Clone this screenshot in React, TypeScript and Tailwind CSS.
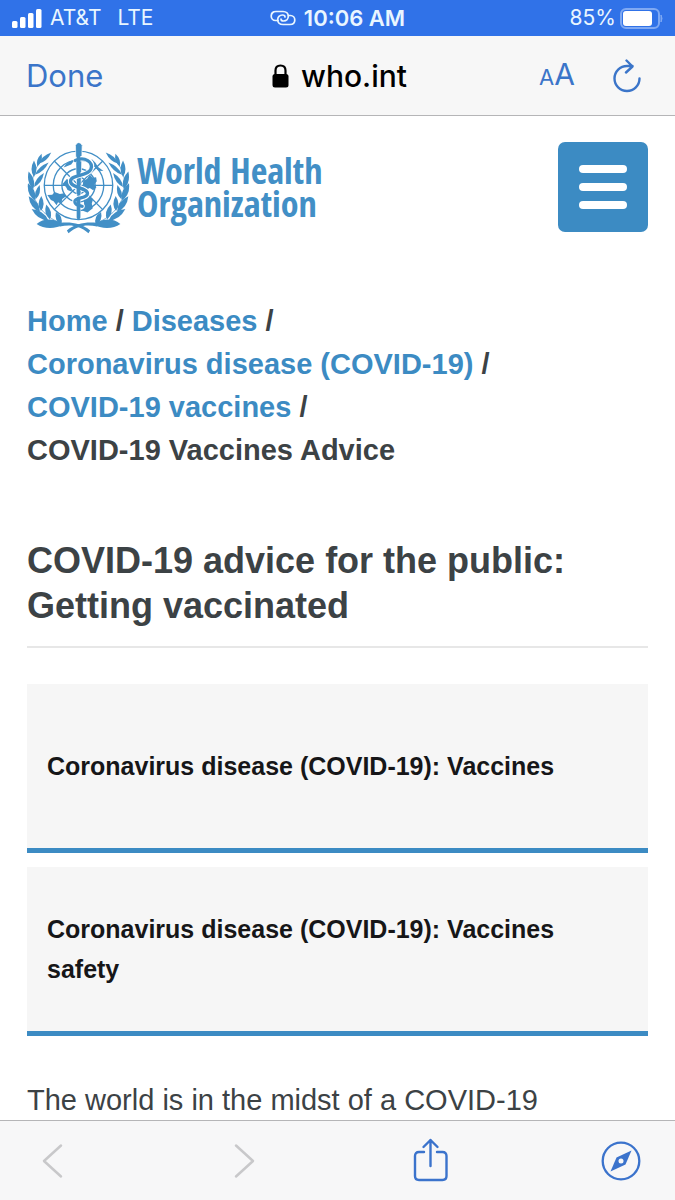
import React from "react";

const leaves: { base: [number, number]; tip: [number, number]; width: number }[] = [
  { base: [68, 98], tip: [106, 64], width: 12 },
  { base: [64, 106], tip: [77, 68], width: 12 },
  { base: [57, 131], tip: [98, 94], width: 12 },
  { base: [54, 138], tip: [54, 88], width: 15 },
  { base: [54, 168], tip: [84, 126], width: 13 },
  { base: [52, 174], tip: [38, 121], width: 16 },
  { base: [59, 205], tip: [71, 162], width: 13 },
  { base: [57, 208], tip: [36, 157], width: 17 },
  { base: [75, 240], tip: [76, 195], width: 15 },
  { base: [72, 243], tip: [38, 196], width: 18 },
  { base: [102, 266], tip: [91, 221], width: 16 },
  { base: [97, 268], tip: [47, 234], width: 18 },
  { base: [136, 280], tip: [120, 243], width: 16 },
];

function leafPath(base: [number, number], tip: [number, number], width: number) {
  const dx = tip[0] - base[0];
  const dy = tip[1] - base[1];
  const length = Math.hypot(dx, dy);
  const nx = (-dy / length) * width;
  const ny = (dx / length) * width;
  const mx = base[0] + dx * 0.45;
  const my = base[1] + dy * 0.45;
  return `M${base[0]} ${base[1]}Q${mx + nx} ${my + ny} ${tip[0]} ${tip[1]}Q${mx - nx} ${my - ny} ${base[0]} ${base[1]}Z`;
}

function Branch() {
  return (
    <g>
      {leaves.map((l) => (
        <path key={`${l.tip[0]}-${l.tip[1]}`} d={leafPath(l.base, l.tip, l.width)} />
      ))}
      <path d="M62 279C84 261 114 262 146 280C115 296 83 294 62 279Z" />
      <path d="M132 276C164 273 196 276 223 299L218 307C188 281 160 281 132 287Z" />
      <path d="M68 98Q36 142 57 205Q72 247 136 280" fill="none" stroke="#428fc6" strokeWidth="2" />
    </g>
  );
}

function Emblem() {
  return (
    <svg viewBox="33 33 310 276" className="h-[92px] w-[103px] shrink-0" fill="#428fc6" aria-hidden="true">
      <g fill="none" stroke="#428fc6" strokeWidth="4">
        <circle cx="188" cy="163" r="103" />
        <circle cx="188" cy="163" r="76" />
        <circle cx="188" cy="163" r="50" />
        <circle cx="188" cy="163" r="25" />
        <path d="M85 163H291M115 90L261 236M261 90L115 236" />
      </g>
      <path d="M94 192L109 191L116 183L132 189L145 187L151 196L139 204L137 215L126 215L122 223L113 211L105 207L99 199Z" />
      <path d="M139 160L153 144L164 151L172 163L164 171L168 182L155 177L150 167Z" />
      <path d="M202 151L214 143L222 130L230 140L241 139L243 151L236 160L242 169L232 178L222 171L209 177L201 167Z" />
      <path d="M203 197L215 190L224 199L232 205L228 218L231 232L215 245L199 239L205 221Z" />
      <path d="M143 109C151 96 163 89 176 87L166 100L151 106ZM227 83L239 95L247 108L263 120L249 119L235 106L231 94Z" />
      <path d="M179 42Q189 28 199 42L193 261H185Z" stroke="#fff" strokeWidth="2" />
      <g fill="none" strokeLinecap="round">
        <path d="M179 86C211 75 234 93 225 115C216 137 163 129 164 151C165 172 216 169 215 188C214 205 176 197 177 213C178 224 192 225 199 226" stroke="#fff" strokeWidth="16" />
        <path d="M178 88C207 75 234 93 225 115C216 137 163 129 164 151C165 172 216 169 215 188C214 205 176 197 177 213C178 224 192 225 199 226" stroke="#428fc6" strokeWidth="10" />
        <path d="M188 42V132M188 158V185M188 202V260" stroke="#428fc6" strokeWidth="11" />
      </g>
      <Branch />
      <g transform="translate(376 0) scale(-1 1)">
        <Branch />
      </g>
    </svg>
  );
}

function StatusBar() {
  return (
    <div className="grid h-9 shrink-0 grid-cols-3 items-center bg-[#3072e8] px-3 text-[21px] leading-9 text-[#e9f6ff]">
      <div className="flex items-center gap-2">
        <svg viewBox="0 0 30 19" className="h-[19px] w-[30px]" fill="#fff" aria-hidden="true">
          <rect x="0" y="12" width="5.500" height="7" rx="1.500" />
          <rect x="8" y="8" width="5.500" height="11" rx="1.500" />
          <rect x="16" y="4" width="5.500" height="15" rx="1.500" />
          <rect x="24" y="0" width="5.500" height="19" rx="1.500" />
        </svg>
        <span>AT&amp;T</span>
        <span className="pl-2">LTE</span>
      </div>
      <div className="flex items-center justify-center gap-2 whitespace-nowrap text-[22px] font-semibold">
        <svg viewBox="0 0 26 16" className="h-4 w-[26px]" fill="none" stroke="currentColor" strokeWidth="1.700" strokeLinecap="round" aria-hidden="true">
          <path d="M8 10.500H5.500C3 10.500 1.200 8.500 1.200 6S3 1.500 6 1.500H13C16.500 1.500 18.300 3.800 18.300 6.300S16.500 11 13.500 11C11.800 11 11 10.200 11 9" />
          <path d="M18.500 5.500H20.500C23 5.500 24.800 7.500 24.800 10S23 14.500 20 14.500H13C9.500 14.500 7.700 12.200 7.700 9.700S9.500 5 12.500 5C14.200 5 15 5.800 15 7" />
        </svg>
        <span>10:06 AM</span>
      </div>
      <div className="flex items-center justify-end gap-1">
        <span>85%</span>
        <svg viewBox="0 0 43 21" className="h-[21px] w-[43px]" aria-hidden="true">
          <rect x="1" y="1" width="38" height="19" rx="5" fill="none" stroke="#7fa9f3" strokeWidth="2" />
          <rect x="3" y="3" width="29" height="15" rx="3" fill="#fff" />
          <path d="M41 7Q43 10.500 41 14Z" fill="#7fa9f3" stroke="#7fa9f3" />
        </svg>
      </div>
    </div>
  );
}

function AddressBar() {
  return (
    <header className="grid h-20 shrink-0 grid-cols-3 items-center border-b border-[#b5b5b7] bg-[#f7f7f7] pl-[26px] pr-[34px] text-[#3b75c9]">
      <button type="button" className="justify-self-start text-[31px] leading-10">
        Done
      </button>
      <div className="flex items-center justify-center gap-3 pl-3 text-[30px] font-medium leading-10 text-black">
        <svg viewBox="0 0 17 24" className="h-6 w-[17px]" aria-hidden="true">
          <rect x="0.500" y="10" width="16" height="13.500" rx="2.500" />
          <path d="M3.500 11V6.500C3.500 3 5.500 1.500 8.500 1.500S13.500 3 13.500 6.500V11" fill="none" stroke="currentColor" strokeWidth="2.200" />
        </svg>
        <span>who.int</span>
      </div>
      <div className="flex items-center justify-end gap-[38px]">
        <button type="button" aria-label="Text size" className="flex items-baseline leading-10">
          <span className="text-[22px]">A</span>
          <span className="text-[30px]">A</span>
        </button>
        <button type="button" aria-label="Reload">
          <svg viewBox="0 0 28 34" className="h-[34px] w-7" fill="none" stroke="currentColor" strokeWidth="2.400" strokeLinecap="round" strokeLinejoin="round">
            <path d="M26.500 19.500A12.500 12.500 0 1 1 14 7H19.500M13.500 1.500L19.500 7.500L13 13.500" />
          </svg>
        </button>
      </div>
    </header>
  );
}

const trail = ["Home", "Diseases", "Coronavirus disease (COVID-19)", "COVID-19 vaccines"];
const topics = ["Coronavirus disease (COVID-19): Vaccines", "Coronavirus disease (COVID-19): Vaccines safety"];

function Page() {
  return (
    <main className="min-h-0 flex-1 overflow-hidden bg-white px-[27px] pt-[26px] font-['Liberation_Sans',Arial,sans-serif] text-[#3c4245]">
      <div className="flex items-start justify-between">
        <a href="#" className="flex items-start gap-[7px] text-[#428fc6]">
          <Emblem />
          <span className="pt-3 font-['Open_Sans_Condensed','Roboto_Condensed','Noto_Sans_Condensed','Liberation_Sans',sans-serif] text-[36px] font-bold leading-[33px]">
            World Health
            <br />
            Organization
          </span>
        </a>
        <button type="button" aria-label="Menu" className="flex size-[90px] flex-col items-center justify-center gap-[10px] rounded-[7px] bg-[#3c8bc3]">
          <span className="h-2 w-12 rounded-full bg-white" />
          <span className="h-2 w-12 rounded-full bg-white" />
          <span className="h-2 w-12 rounded-full bg-white" />
        </button>
      </div>

      <nav aria-label="Breadcrumb" className="mt-[66px] text-[29px] font-bold leading-[43px]">
        <ol className="flex flex-wrap gap-x-2">
          {trail.map((name) => (
            <li key={name}>
              <a href="#" className="text-[#3c8bc3]">
                {name}
              </a>{" "}
              /
            </li>
          ))}
          <li className="w-full">COVID-19 Vaccines Advice</li>
        </ol>
      </nav>

      <h1 className="mt-[66px] border-b-2 border-[#e7e7e7] pb-[18px] text-[36px] font-bold leading-[45px]">
        COVID-19 advice for the public: Getting vaccinated
      </h1>

      <div className="mt-9 flex flex-col gap-[14px]">
        {topics.map((name) => (
          <a
            key={name}
            href="#"
            className="flex h-[169px] items-center border-b-[5px] border-[#3c8bc3] bg-[#f6f6f6] px-5 text-[25px] font-bold leading-10 text-[#161618]"
          >
            {name}
          </a>
        ))}
      </div>

      <p className="mt-[43px] text-[29px] leading-[43px]">The world is in the midst of a COVID-19</p>
    </main>
  );
}

function Toolbar() {
  return (
    <footer className="flex h-20 shrink-0 items-center justify-between border-t border-[#b5b5b7] bg-[#f7f7f8] px-[34px] text-[#3b73cc]">
      <button type="button" aria-label="Back" disabled className="text-[#c8c8ca]">
        <svg viewBox="0 0 36 36" className="size-9" fill="none" stroke="currentColor" strokeWidth="2.500" strokeLinecap="round" strokeLinejoin="round">
          <path d="M27 2.500L10 18L27 33.500" />
        </svg>
      </button>
      <button type="button" aria-label="Forward" disabled className="text-[#c8c8ca]">
        <svg viewBox="0 0 36 36" className="size-9" fill="none" stroke="currentColor" strokeWidth="2.500" strokeLinecap="round" strokeLinejoin="round">
          <path d="M13 2.500L30 18L13 33.500" />
        </svg>
      </button>
      <button type="button" aria-label="Share">
        <svg viewBox="-1 2 36 46" className="h-[46px] w-9" fill="none" stroke="currentColor" strokeWidth="2.400" strokeLinecap="round" strokeLinejoin="round">
          <path d="M11 16H6Q2 16 2 20V40Q2 44 6 44H29.500Q33.500 44 33.500 40V20Q33.500 16 29.500 16H24M17.500 30V4M10.500 11L17.500 4L24.500 11" />
        </svg>
      </button>
      <button type="button" aria-label="Open in browser">
        <svg viewBox="0 0 40 40" className="size-10" fill="none">
          <circle cx="20" cy="20" r="18.300" stroke="currentColor" strokeWidth="2.300" />
          <path d="M30.500 9.500L24.500 23.500L9.500 30.500L15.500 16.500Z" fill="currentColor" />
          <circle cx="20" cy="20" r="2.500" fill="#f7f7f8" />
        </svg>
      </button>
    </footer>
  );
}

export default function App() {
  return (
    <div className="flex h-screen flex-col font-['Inter',sans-serif]">
      <StatusBar />
      <AddressBar />
      <Page />
      <Toolbar />
    </div>
  );
}
